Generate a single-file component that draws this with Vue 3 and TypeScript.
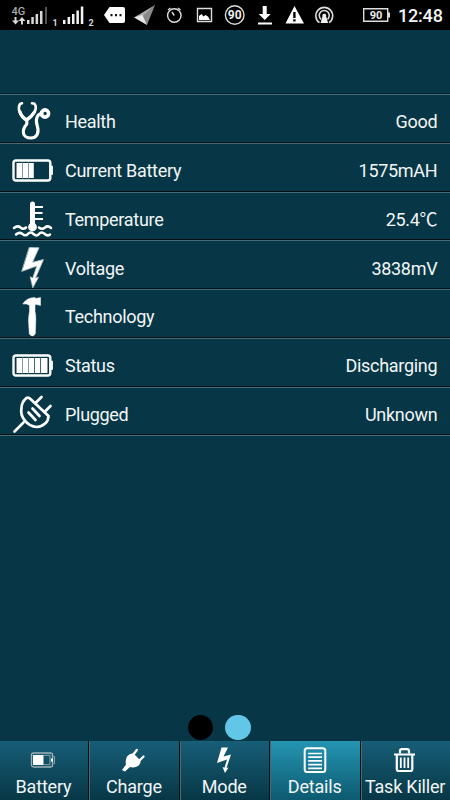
<script setup lang="ts">
type IconName = 'health' | 'half' | 'temp' | 'bolt' | 'hammer' | 'full' | 'plug'

interface Row {
  label: string
  value: string
  icon: IconName
}

interface Tab {
  label: string
  icon: string
  active?: boolean
}

const rows: Row[] = [
  { label: 'Health', value: 'Good', icon: 'health' },
  { label: 'Current Battery', value: '1575mAH', icon: 'half' },
  { label: 'Temperature', value: '25.4℃', icon: 'temp' },
  { label: 'Voltage', value: '3838mV', icon: 'bolt' },
  { label: 'Technology', value: '', icon: 'hammer' },
  { label: 'Status', value: 'Discharging', icon: 'full' },
  { label: 'Plugged', value: 'Unknown', icon: 'plug' },
]

const tabs: Tab[] = [
  { label: 'Battery', icon: 'battery' },
  { label: 'Charge', icon: 'charge' },
  { label: 'Mode', icon: 'mode' },
  { label: 'Details', icon: 'details', active: true },
  { label: 'Task Killer', icon: 'trash' },
]
</script>

<template>
  <div class="screen">
    <header class="status">
      <svg class="status-icons" viewBox="0 0 396 30" width="396" height="30">
        <g fill="#d8d8d8">
          <text x="11.5" y="15" class="net">4G</text>
          <path d="M14.500 17v3.500H12l3.500 4 3.500-4h-2.500V17zM23 24.500V21h2.500L22 17l-3.500 4H21v3.500z" />
          <path d="M27 20h2.500v4H27zM31.300 17h2.500v7h-2.500zM35.600 14h2.500v10h-2.500zM40 11h2.500v13H40z" />
          <path d="M45 7h2v17h-2z" fill="#555" />
          <text x="52.500" y="25.500" class="sim">1</text>
          <path d="M63 20h2.500v4H63zM67.600 17h2.500v7h-2.500zM72 14h2.500v10H72zM76.400 10.500h2.500V24h-2.500zM80.800 6.500h2.500V24h-2.500z" fill="#f4f4f4" />
          <text x="88.500" y="25.500" class="sim">2</text>
        </g>
        <path d="M109.500 7H123q2 0 2 2v12q0 2-2 2h-13.500L104 15z" fill="#fff" />
        <path d="M110.500 14h2v2.200h-2zM115 14h2v2.200h-2zM119.500 14h2v2.200h-2z" fill="#111" />
        <path d="M155 5l-21 12.500 8.500.5z" fill="#aaa" />
        <path d="M155 5l-12.500 11.500 4.500 8.500z" fill="#888" />
        <path d="M134 17.500l8.500-2.500 4.500 10z" fill="#e8e8e8" />
        <g fill="none" stroke="#ddd" stroke-width="1.400">
          <circle cx="174.300" cy="15.500" r="6.700" />
          <path d="M168 10l2.500-2M178 8l2.500 2M172 12l2.300 3.500" />
          <path d="M197.500 8.500h14v13h-14z" />
          <circle cx="234.700" cy="15" r="9.300" />
        </g>
        <path d="M199 20v-4l2.500-2 2 2.500 2-1.500 2.500 1.500 2 3.500z" fill="#fff" />
        <text x="234.700" y="19.200" text-anchor="middle" class="round-num">90</text>
        <path d="M262.700 6h4v8h4l-6 6-6-6h4zM258 22.500h14v2h-14z" fill="#fff" />
        <path fill-rule="evenodd" d="M294.500 6L304 23.500h-18.500zM293.200 12v6h2.400v-6zm0 7.300v2.200h2.400v-2.200z" fill="#fff" />
        <g fill="none" stroke="#ddd" stroke-width="1.600">
          <path d="M319.500 22.700a8.400 8.400 0 1 1 9.500 0M321 19.300a5 5 0 1 1 6.500 0" />
        </g>
        <path d="M324.300 13.700a1.800 1.800 0 0 1 1.800 2.500l2 6.800h-7.600l2-6.800a1.800 1.800 0 0 1 1.800-2.500z" fill="#eee" />
        <path d="M363.700 8.700h24v12.600h-24z" fill="none" stroke="#ddd" stroke-width="1.400" />
        <path d="M388 12.500h2v5h-2z" fill="#ddd" />
        <text x="376" y="19" text-anchor="middle" class="batt-num">90</text>
      </svg>
      <span class="clock">12:48</span>
    </header>

    <main class="list">
      <div v-for="row in rows" :key="row.label" class="row">
        <svg class="row-icon" viewBox="0 0 42 42" width="42" height="42" fill="none" stroke="#fff" stroke-linecap="round" stroke-linejoin="round">
          <template v-if="row.icon === 'health'">
            <path d="M10 3.300L8 4C5.500 8 7 15 14.500 20 22 15 26 8 22.500 3.800L20 3.300" stroke-width="2.600" />
            <path d="M8 12q1.500 5 6.500 8 5-3 8-8" stroke-width="3.400" />
            <path d="M14.800 20.500v3.500c-6 7-4 14 4 14 6.500 0 8.500-6 6.500-12-2.400-7 .2-12.500 4.700-12.500" stroke-width="3.100" />
            <circle cx="33" cy="13.500" r="3.600" stroke-width="3.600" />
          </template>
          <template v-else-if="row.icon === 'half' || row.icon === 'full'">
            <rect x="1.500" y="11.500" width="36.800" height="20" rx="2.500" stroke-width="2.400" />
            <path d="M38.500 17h2v8.500h-2z" fill="#fff" stroke-width=".8" />
            <path v-if="row.icon === 'half'" d="M4.500 14h17.300v15H4.500z" fill="#fff" stroke="none" />
            <path v-else d="M4.500 14h31v15h-31z" fill="#fff" stroke="none" />
            <path d="M10.500 13.500v16M16.500 13.500v16" stroke="#64818b" stroke-width=".8" />
            <path v-if="row.icon === 'full'" d="M22.500 13.500v16M28.500 13.500v16" stroke="#2c5663" stroke-width=".9" />
          </template>
          <template v-else-if="row.icon === 'temp'">
            <path d="M20.500 6v22" stroke-width="5" />
            <circle cx="20.500" cy="29" r="4.400" fill="#fff" stroke="none" />
            <path d="M23 9h8M23 15h7.500M23 21h8" stroke-width="2.200" stroke-linecap="butt" />
            <path d="M2 30q3.500-3 6.500-.5t5.500 0M27 29.500q3 2.500 6 0t6 .5M4 36.500q3.500-3 6.500-.5t5.500-.2 5.500.2 5.500 0 5.500-.2 5.500.7" stroke-width="2.500" />
          </template>
          <path v-else-if="row.icon === 'bolt'" d="M17.500 .500L27 .8 20.500 15.300l11-2.700-8 18.500 3-.8-5.700 10.500-2.600-11 2.600 1.200 4-12L10 24.300z" fill="#fff" stroke="#b9c7cc" stroke-width=".8" />
          <path v-else-if="row.icon === 'hammer'" d="M11 8.500q4-6 12-6l1 1 4.500-1v8L24 9.300l-1 1.200v6q1 4 .8 9l-.5 13.500q-3 3.800-6 0l-.8-13.500q.2-5 1-9v-6q-3-2.500-6-1.500z" fill="#fff" stroke-width=".5" />
          <template v-else>
            <path d="M14.200 5.200q2-1.500 4 .5L36.500 23c0 6-5 10.500-12 11-9-.5-17-10-15-19 0-4 2-7.500 4.700-9.800z" stroke-width="2.700" />
            <path d="M23.500 10l6-6M32.500 19l6-6M11.500 29.500L2.500 38.500M16.500 19.500l7 7.500M20.500 15.500l7 7.500" stroke-width="2.700" />
          </template>
        </svg>
        <span class="label">{{ row.label }}</span>
        <span class="value">{{ row.value }}</span>
      </div>
    </main>

    <div class="dots">
      <span class="dot"></span>
      <span class="dot current"></span>
    </div>

    <nav class="tabs">
      <div v-for="tab in tabs" :key="tab.label" class="tab" :class="{ active: tab.active }">
        <svg viewBox="0 0 28 28" width="28" height="28" fill="none" stroke="#fff">
          <template v-if="tab.icon === 'battery'">
            <rect x="2.500" y="7" width="21" height="14" rx="2" stroke="#9fb2b9" stroke-width="1.300" />
            <path d="M23.500 10.500h2v7h-2M14.500 9.300h6.500v9.400h-6.500" stroke="#8aa3ad" />
            <path d="M4 9h10.500v10H4zM22 12.500h2v3h-2z" fill="#fff" stroke="none" />
          </template>
          <template v-else-if="tab.icon === 'charge'">
            <path d="M7 10.500q4-4.500 7-2.500l6.500 6.500q.5 4-3.500 6-4 1.500-7 .5l-5 4.500-3-1.500 4-5.500q-1-4 1-8z" fill="#fff" stroke="none" />
            <path d="M13 9l3.800-5M19 15l4.500-4.500" stroke-width="2.300" stroke-linecap="round" />
          </template>
          <path v-else-if="tab.icon === 'mode'" d="M11.500 1.500H18L13.500 10.500l7.500-2-4.500 13.500 2-.5-3.500 5.500-2.500-6 2 .8 2.500-8.300L7 17z" fill="#fff" stroke="none" />
          <template v-else-if="tab.icon === 'details'">
            <rect x="3.700" y="2.300" width="20.600" height="23.700" rx="2.500" stroke-width="2" />
            <path d="M7.200 7.500H21M7.200 11.200H21M7.200 14.900H21M7.200 18.600H21M7.200 22.300H21" stroke-width="1.700" />
          </template>
          <template v-else>
            <path d="M3 8.500h21M5.800 8.500v14.500q0 2 2 2h11.500q2 0 2-2V8.500" stroke-width="2.200" />
            <path d="M9 7.500V5.200q0-2 2-2h5q2 0 2 2v2.300" stroke-width="2.200" />
            <path d="M9.800 11.500v10.500M13.500 11.500v10.500M17.200 11.500v10.500" stroke-width="1.800" />
          </template>
        </svg>
        <span>{{ tab.label }}</span>
      </div>
    </nav>
  </div>
</template>

<style>
body {
  background: #073746;
}
</style>

<style scoped>
.screen {
  display: flex;
  flex-direction: column;
  width: 450px;
  height: 800px;
  overflow: hidden;
  background: #073746;
  color: #f2f5f6;
  font-family: Roboto, 'Noto Sans CJK SC', sans-serif;
}
.status {
  display: flex;
  height: 30px;
  background: #000;
}
.status-icons {
  flex: none;
}
.net { font-size: 11px; font-weight: 500; fill: #aaa; }
.sim { font-size: 9px; font-weight: 700; }
.round-num { font-size: 12px; font-weight: 700; fill: #eee; }
.batt-num { font-size: 11px; font-weight: 700; fill: #eee; }
.clock {
  padding-left: 2px;
  font-size: 18px;
  font-weight: 500;
  letter-spacing: -0.2px;
  line-height: 32px;
}
.list {
  flex: 1;
  margin-top: 63px;
  border-top: 1px solid #04222b;
}
.row {
  display: flex;
  align-items: center;
  box-sizing: border-box;
  height: 48.75px;
  padding: 6px 13px 0 12px;
  border-top: 1px solid #456b77;
  border-bottom: 1px solid #001015;
  font-size: 18px;
  line-height: 22px;
  letter-spacing: -0.3px;
}
.row:last-child {
  box-shadow: 0 1px #456b77;
}
.row-icon {
  flex: none;
}
.label {
  margin-left: 11px;
  padding-top: 2px;
}
.value {
  height: 22px;
  margin-left: auto;
  margin-right: -0.3px;
  padding-top: 2px;
}
.dots {
  display: flex;
  gap: 12px;
  padding: 0 0 1px 187.500px;
}
.dot {
  width: 25.500px;
  height: 25.500px;
  border-radius: 50%;
  background: #000;
}
.dot.current {
  background: #62c7e6;
}
.tabs {
  display: flex;
  gap: 2px;
  height: 59px;
  background: #020d11;
}
.tab {
  display: flex;
  flex: 1 1 0;
  flex-direction: column;
  align-items: center;
  box-sizing: border-box;
  min-width: 0;
  padding: 5px 1.500px 0 0;
  background: linear-gradient(#175e77, #073746);
  box-shadow: -1px 0 #456b77;
  font-size: 18px;
  line-height: 26px;
  letter-spacing: -0.2px;
  white-space: nowrap;
}
.tab.active {
  background: linear-gradient(#2595b2, #0c5a70);
}
</style>
